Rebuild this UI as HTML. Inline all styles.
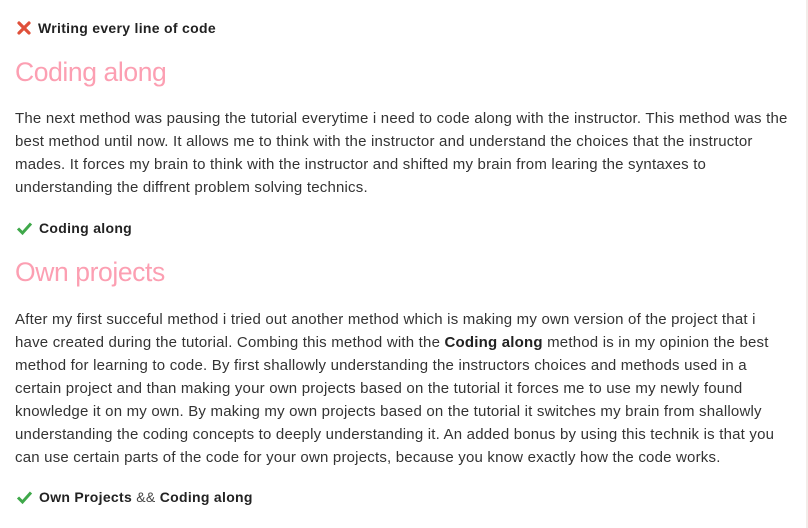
<!DOCTYPE html>
<html><head><meta charset="utf-8"><style>
html,body{margin:0;padding:0;background:#fff;width:808px;height:528px;overflow:hidden;position:relative}
.vl{position:absolute;left:806px;top:0;width:2px;height:528px;background:#f3ece9}
.l{position:absolute;left:15px;white-space:nowrap;font-family:"Liberation Sans",sans-serif}
.lab{font-size:14px;font-weight:bold;color:#222;height:20px;line-height:20px;letter-spacing:0.3px}
.lab svg{vertical-align:-3px;margin-right:6px}
.h{font-size:26.5px;color:#fc9fb2;height:34px;line-height:34px;letter-spacing:-0.4px}
.p{font-size:15px;color:#333;height:23px;line-height:23px;letter-spacing:0.2px}
.p b{color:#222}
</style></head><body>
<div class="vl"></div>
<div class="l lab" style="top:18px;left:16px"><svg width="16" height="16" viewBox="0 0 16 16"><path d="M3 3L13 13M13 3L3 13" stroke="#e0503a" stroke-width="3.2" stroke-linecap="round"/></svg>Writing every line of code</div>
<div class="l h" style="top:55px">Coding along</div>
<div class="l p" style="top:107px">The next method was pausing the tutorial everytime i need to code along with the instructor. This method was the</div>
<div class="l p" style="top:130px">best method until now. It allows me to think with the instructor and understand the choices that the instructor</div>
<div class="l p" style="top:153px">mades. It forces my brain to think with the instructor and shifted my brain from learing the syntaxes to</div>
<div class="l p" style="top:176px">understanding the diffrent problem solving technics.</div>
<div class="l lab" style="top:218px;left:16px"><svg width="17" height="16" viewBox="0 0 17 16"><path d="M2 8.5L6.5 13L15 3.5" fill="none" stroke="#3fa84a" stroke-width="3"/></svg>Coding along</div>
<div class="l h" style="top:255px">Own projects</div>
<div class="l p" style="top:308px">After my first succeful method i tried out another method which is making my own version of the project that i</div>
<div class="l p" style="top:331px">have created during the tutorial. Combing this method with the <b>Coding along</b> method is in my opinion the best</div>
<div class="l p" style="top:354px">method for learning to code. By first shallowly understanding the instructors choices and methods used in a</div>
<div class="l p" style="top:377px">certain project and than making your own projects based on the tutorial it forces me to use my newly found</div>
<div class="l p" style="top:400px">knowledge it on my own. By making my own projects based on the tutorial it switches my brain from shallowly</div>
<div class="l p" style="top:423px">understanding the coding concepts to deeply understanding it. An added bonus by using this technik is that you</div>
<div class="l p" style="top:446px">can use certain parts of the code for your own projects, because you know exactly how the code works.</div>
<div class="l lab" style="top:487px;left:16px"><svg width="17" height="16" viewBox="0 0 17 16"><path d="M2 8.5L6.5 13L15 3.5" fill="none" stroke="#3fa84a" stroke-width="3"/></svg>Own Projects <span style="font-weight:normal;color:#444">&amp;&amp;</span> Coding along</div>
</body></html>
